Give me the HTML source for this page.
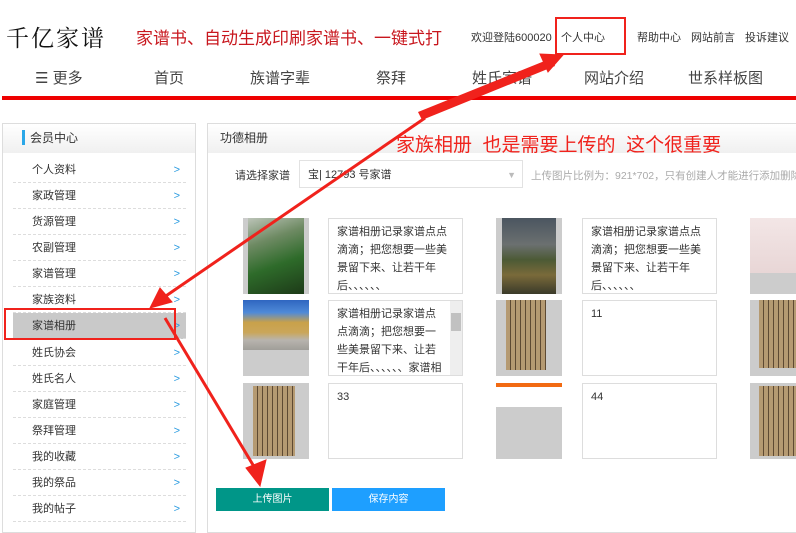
<!DOCTYPE html><html><head><meta charset="utf-8"><style>
*{margin:0;padding:0;box-sizing:border-box}
body{width:796px;height:525px;overflow:hidden;background:#fff;position:relative;font-family:"Liberation Sans","Noto Sans CJK SC",sans-serif;color:#333}
.a{position:absolute;white-space:nowrap}
.it{position:absolute;left:13px;width:173px;height:26px;border-bottom:1px dashed #ddd;font-size:11px;line-height:26px;padding-left:19px;color:#333}
.it span{position:absolute;right:6px;color:#2a9be0;font-size:11px}
.ta{position:absolute;width:135px;height:76px;border:1px solid #ddd;font-size:11px;line-height:18px;padding:4px 8px;color:#333;white-space:normal;overflow:hidden}
.g{position:absolute;width:66px;height:76px;background:#ccc;overflow:hidden}
</style></head><body>
<div class="a" style="left:6px;top:20px;font-size:23px;font-family:'Noto Serif CJK SC',serif;color:#111;letter-spacing:2px">千亿家谱</div>
<div class="a" style="left:136px;top:24px;font-size:17px;color:#c8171e;width:318px;overflow:hidden">家谱书、自动生成印刷家谱书、一键式打</div>
<div class="a" style="left:471px;top:29px;font-size:11px">欢迎登陆600020</div>
<div class="a" style="left:561px;top:29px;font-size:11px">个人中心</div>
<div class="a" style="left:555px;top:17px;width:71px;height:38px;border:2px solid #f0221c"></div>
<div class="a" style="left:637px;top:29px;font-size:11px">帮助中心</div>
<div class="a" style="left:691px;top:29px;font-size:11px">网站前言</div>
<div class="a" style="left:745px;top:29px;font-size:11px">投诉建议</div>
<div class="a" style="left:35px;top:67px;font-size:15px;color:#444">☰ 更多</div>
<div class="a" style="left:154px;top:67px;font-size:15px;color:#444">首页</div>
<div class="a" style="left:250px;top:67px;font-size:15px;color:#444">族谱字辈</div>
<div class="a" style="left:376px;top:67px;font-size:15px;color:#444">祭拜</div>
<div class="a" style="left:472px;top:67px;font-size:15px;color:#444">姓氏家谱</div>
<div class="a" style="left:584px;top:67px;font-size:15px;color:#444">网站介绍</div>
<div class="a" style="left:688px;top:67px;font-size:15px;color:#444">世系样板图</div>
<div class="a" style="left:2px;top:96px;width:794px;height:4px;background:#e00"></div>
<!-- sidebar -->
<div class="a" style="left:2px;top:123px;width:194px;height:410px;border:1px solid #ddd"></div>
<div class="a" style="left:3px;top:124px;width:192px;height:29px;background:linear-gradient(#fff,#f0f0f0)"></div>
<div class="a" style="left:22px;top:130px;width:3px;height:15px;background:#2aa7e8"></div>
<div class="a" style="left:30px;top:129px;font-size:12px">会员中心</div>
<div class="it" style="top:157px">个人资料<span>&gt;</span></div>
<div class="it" style="top:183px">家政管理<span>&gt;</span></div>
<div class="it" style="top:209px">货源管理<span>&gt;</span></div>
<div class="it" style="top:235px">农副管理<span>&gt;</span></div>
<div class="it" style="top:261px">家谱管理<span>&gt;</span></div>
<div class="it" style="top:287px">家族资料<span>&gt;</span></div>
<div class="it" style="top:313px;background:#c9c9c9">家谱相册<span>&gt;</span></div>
<div class="it" style="top:340px">姓氏协会<span>&gt;</span></div>
<div class="it" style="top:366px">姓氏名人<span>&gt;</span></div>
<div class="it" style="top:392px">家庭管理<span>&gt;</span></div>
<div class="it" style="top:418px">祭拜管理<span>&gt;</span></div>
<div class="it" style="top:444px">我的收藏<span>&gt;</span></div>
<div class="it" style="top:470px">我的祭品<span>&gt;</span></div>
<div class="it" style="top:496px">我的帖子<span>&gt;</span></div>
<div class="a" style="left:4px;top:308px;width:172px;height:32px;border:2px solid #f0221c"></div>
<!-- main -->
<div class="a" style="left:207px;top:123px;width:600px;height:410px;border:1px solid #ddd"></div>
<div class="a" style="left:208px;top:124px;width:590px;height:29px;background:linear-gradient(#fff,#f0f0f0)"></div>
<div class="a" style="left:220px;top:129px;font-size:12px">功德相册</div>
<div class="a" style="left:396px;top:130px;font-size:19px;color:#f0221c">家族相册&nbsp; 也是需要上传的&nbsp; 这个很重要</div>
<div class="a" style="left:235px;top:167px;font-size:11px">请选择家谱</div>
<div class="a" style="left:299px;top:160px;width:224px;height:28px;border:1px solid #e2e2e2;font-size:11px;line-height:28px;padding-left:8px">宝| 12793 号家谱<span style="position:absolute;right:6px;color:#bbb;font-size:9px">▼</span></div>
<div class="a" style="left:531px;top:168px;font-size:10.5px;color:#aaa">上传图片比例为：921*702，只有创建人才能进行添加删除</div>
<!-- row1 -->
<div class="g" style="left:243px;top:218px"><div style="position:absolute;left:5px;right:5px;top:0;bottom:0;background:linear-gradient(160deg,#bcc4b8 0%,#6e8a63 30%,#2e6b2a 60%,#1d3a18 100%)"></div></div>
<div class="ta" style="left:328px;top:218px">家谱相册记录家谱点点滴滴；把您想要一些美景留下来、让若干年后、、、、、、</div>
<div class="g" style="left:496px;top:218px"><div style="position:absolute;left:6px;right:6px;top:0;bottom:0;background:linear-gradient(#4b5560 0%,#6b7070 35%,#4c5a35 55%,#7a6a3a 75%,#3a3a2a 100%)"></div></div>
<div class="ta" style="left:582px;top:218px">家谱相册记录家谱点点滴滴；把您想要一些美景留下来、让若干年后、、、、、、</div>
<div class="g" style="left:750px;top:218px"><div style="position:absolute;left:0;right:0;top:0;height:55px;background:linear-gradient(#f3e6e6,#e8d6d6)"></div></div>
<!-- row2 -->
<div class="g" style="left:243px;top:300px"><div style="position:absolute;left:0;right:0;top:0;height:50px;background:linear-gradient(#2f66c0 0%,#4f8ad8 25%,#c9a14a 45%,#caa65a 65%,#b8b4ae 80%,#a09e99 100%)"></div></div>
<div class="ta" style="left:328px;top:300px;padding-right:18px">家谱相册记录家谱点点滴滴；把您想要一些美景留下来、让若干年后、、、、、、家谱相册记录家谱点点滴滴；<div style="position:absolute;right:0;top:0;width:12px;height:76px;background:#eee"><div style="margin:12px 1px;height:18px;background:#c1c1c1"></div></div></div>
<div class="g" style="left:496px;top:300px"><div style="position:absolute;left:10px;right:16px;top:0;height:70px;background:repeating-linear-gradient(90deg,#b59a72 0 4px,#5e4a33 4px 5px)"></div></div>
<div class="ta" style="left:582px;top:300px">11</div>
<div class="g" style="left:750px;top:300px"><div style="position:absolute;left:9px;right:0;top:0;height:68px;background:repeating-linear-gradient(90deg,#b59a72 0 4px,#5e4a33 4px 5px)"></div></div>
<!-- row3 -->
<div class="g" style="left:243px;top:383px"><div style="position:absolute;left:10px;right:14px;top:3px;height:70px;background:repeating-linear-gradient(90deg,#b59a72 0 4px,#5e4a33 4px 5px)"></div></div>
<div class="ta" style="left:328px;top:383px">33</div>
<div class="g" style="left:496px;top:383px"><div style="position:absolute;left:0;right:0;top:0;height:24px;background:linear-gradient(#f26a12 0 4px,#fff 4px);"></div></div>
<div class="ta" style="left:582px;top:383px">44</div>
<div class="g" style="left:750px;top:383px"><div style="position:absolute;left:9px;right:0;top:3px;height:70px;background:repeating-linear-gradient(90deg,#b59a72 0 4px,#5e4a33 4px 5px)"></div></div>
<div class="a" style="left:216px;top:488px;width:113px;height:23px;background:#009688;color:#fff;font-size:10px;text-align:center;line-height:23px">上传图片</div>
<div class="a" style="left:332px;top:488px;width:113px;height:23px;background:#1e9fff;color:#fff;font-size:10px;text-align:center;line-height:23px">保存内容</div>
<svg class="a" style="left:0;top:0" width="796" height="525">
<g fill="#f0221c" stroke="#f0221c">
<polygon points="418,112 552,58 555,66 422,120" stroke="none"/>
<polygon points="563,55 540,54 548,72"/>
<line x1="425" y1="118" x2="160" y2="300" stroke-width="3"/>
<polygon points="150,308 160,288 172,302"/>
<line x1="165" y1="318" x2="256" y2="470" stroke-width="3"/>
<polygon points="260,486 246,468 266,460"/>
</g></svg>
</body></html>
